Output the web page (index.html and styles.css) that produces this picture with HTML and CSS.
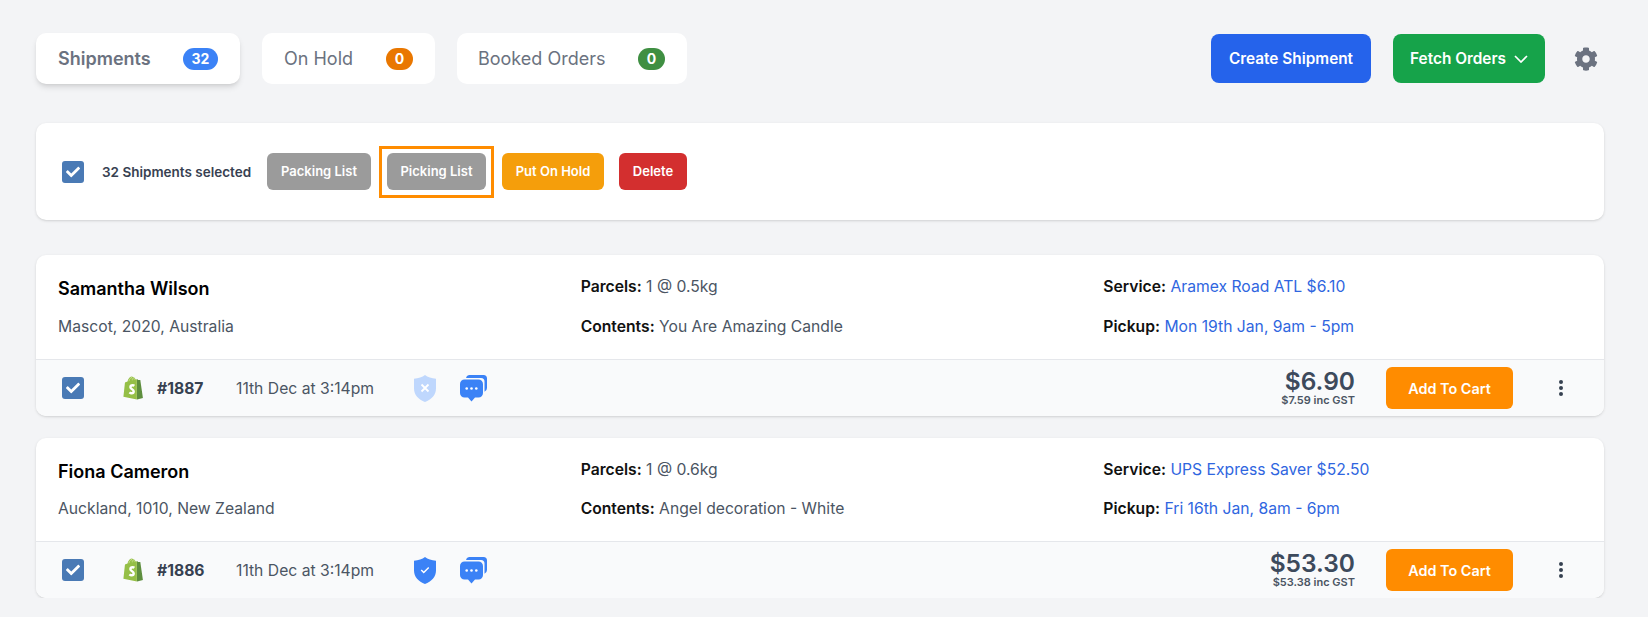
FILE: index.html
```html
<!DOCTYPE html>
<html lang="en">
<head>
<meta charset="utf-8">
<title>Shipments</title>
<link rel="stylesheet" href="styles.css">
</head>
<body>
<svg class="defs" width="0" height="0" aria-hidden="true">
  <symbol id="i-check" viewBox="0 0 512 512"><path fill="#fff" d="M173.898 439.404l-166.4-166.4c-9.997-9.997-9.997-26.206 0-36.204l36.203-36.204c9.997-9.998 26.207-9.998 36.204 0L192 312.69 432.095 72.596c9.997-9.997 26.207-9.997 36.204 0l36.203 36.204c9.997 9.997 9.997 26.206 0 36.204l-294.4 294.401c-9.998 9.997-26.207 9.997-36.204-.001z"/></symbol>
  <symbol id="i-shopify" viewBox="0 0 21 24">
    <path fill="#95bf47" d="M14.6 3.2l-1 .3C13.2 2.2 12.5 1.2 11.3 1.2h-.2C10.7.7 10.3.5 9.9.5 7.2.5 5.9 3.900 5.500 5.600l-1.900.6c-.6.2-.6.2-.7.8L1.400 20.800 14.900 23.400V3.200h-.3z"/>
    <path fill="#5e8e3e" d="M15 3.100v20.300l6-1.400S18.400 4.500 18.400 4.400c0-.2-.1-.3-.3-.3l-1.900-.1-1.200-.9z"/>
    <path fill="none" stroke="#c7e08f" stroke-width=".9" d="M6.900 5.200C7.500 3.100 8.600 1.400 10 1.300M10.300 4.300V3.600c0-1-.1-1.700-.6-2M12.300 3.700c-.1-.9-.5-1.900-1.200-2.100"/>
    <path fill="none" stroke="#fff" stroke-width="2.400" d="M12.400 9.700c-.5-.3-1.100-.4-1.700-.4-1.500 0-2.300 1-2.300 1.900 0 2 3.300 2 3.300 4.100 0 1.200-1 2-2.100 2-.8 0-1.600-.4-2.200-.9"/>
  </symbol>
  <symbol id="i-chat" viewBox="0 0 27 27">
    <path fill="#3b82f6" d="M9 0h14.500A3.500 3.500 0 0 1 27 3.500V13a4 4 0 0 1-2.500 3.700V6.500A3.500 3.500 0 0 0 21 3H6A3.500 3.500 0 0 1 9 0z"/>
    <path fill="#3b82f6" d="M4.500 4.500H18.500A4.500 4.500 0 0 1 23 9V18a4.500 4.500 0 0 1-4.500 4.500H15L11.500 26.500 8 22.500H4.500A4.500 4.500 0 0 1 0 18V9A4.500 4.500 0 0 1 4.500 4.500z"/>
    <circle cx="6.700" cy="13.500" r="1.300" fill="#fff"/><circle cx="11.500" cy="13.500" r="1.300" fill="#fff"/><circle cx="16.300" cy="13.500" r="1.300" fill="#fff"/>
  </symbol>
  <symbol id="i-shield" viewBox="0 0 22 27"><path d="M11 0c2.700 2.200 6.600 3.400 11 3.700V13.500C22 20 17.500 24.500 11 27 4.500 24.500 0 20 0 13.500V3.700C4.400 3.400 8.300 2.200 11 0z"/></symbol>
</svg>

<main class="page">
  <header class="topbar">
    <nav class="tabs">
      <a class="tab tab-active">Shipments <span class="pill pill-blue">32</span></a>
      <a class="tab tab-hold">On Hold <span class="pill pill-orange">0</span></a>
      <a class="tab tab-booked">Booked Orders <span class="pill pill-green">0</span></a>
    </nav>
    <div class="actions">
      <button class="btn-top btn-create">Create Shipment</button>
      <button class="btn-top btn-fetch">Fetch Orders
        <svg class="chevron" viewBox="0 0 14 8" width="14" height="8"><path d="M1 1l6 6 6-6" fill="none" stroke="#fff" stroke-width="1.700"/></svg>
      </button>
      <svg class="gear" viewBox="0 0 512 512" width="24" height="24"><path fill="#6b7280" d="M487.4 315.700l-42.600-24.600c4.300-23.200 4.300-47 0-70.200l42.600-24.600c4.900-2.800 7.100-8.600 5.500-14-11.100-35.600-30-67.800-54.700-94.600-3.800-4.100-10-5.100-14.800-2.300L380.800 110c-17.900-15.400-38.500-27.300-60.800-35.100V25.800c0-5.600-3.900-10.500-9.400-11.700-36.700-8.200-74.300-7.800-109.200 0-5.500 1.200-9.400 6.100-9.400 11.700V75c-22.200 7.900-42.800 19.800-60.800 35.100L88.700 85.500c-4.900-2.800-11-1.900-14.800 2.300-24.700 26.700-43.600 58.900-54.700 94.600-1.700 5.400.6 11.200 5.500 14L67.300 221c-4.300 23.200-4.300 47 0 70.200l-42.600 24.600c-4.900 2.800-7.100 8.600-5.500 14 11.100 35.600 30 67.800 54.700 94.600 3.800 4.100 10 5.100 14.800 2.300l42.600-24.600c17.900 15.400 38.500 27.300 60.800 35.100v49.200c0 5.600 3.900 10.500 9.400 11.700 36.700 8.200 74.300 7.800 109.200 0 5.500-1.200 9.400-6.100 9.400-11.700v-49.200c22.200-7.900 42.800-19.800 60.800-35.100l42.600 24.600c4.900 2.800 11 1.900 14.800-2.300 24.700-26.700 43.600-58.900 54.700-94.600 1.500-5.500-.7-11.300-5.600-14.100zM256 336c-44.100 0-80-35.900-80-80s35.900-80 80-80 80 35.900 80 80-35.900 80-80 80z"/></svg>
    </div>
  </header>

  <section class="bulk">
    <span class="check"><svg width="14" height="14"><use href="#i-check"/></svg></span>
    <span class="bulk-count">32 Shipments selected</span>
    <button class="btn-bulk btn-grey btn-packing">Packing List</button>
    <span class="focus-ring"><button class="btn-bulk btn-grey btn-picking">Picking List</button></span>
    <button class="btn-bulk btn-amber">Put On Hold</button>
    <button class="btn-bulk btn-red">Delete</button>
  </section>

  <article class="card">
    <div class="card-body">
      <div class="col">
        <h2 class="name">Samantha Wilson</h2>
        <p class="line">Mascot, 2020, Australia</p>
      </div>
      <div class="col">
        <p class="line"><b>Parcels:</b> 1 @ 0.5kg</p>
        <p class="line"><b>Contents:</b> You Are Amazing Candle</p>
      </div>
      <div class="col">
        <p class="line"><b>Service:</b> <a class="link">Aramex Road ATL $6.10</a></p>
        <p class="line"><b>Pickup:</b> <a class="link">Mon 19th Jan, 9am - 5pm</a></p>
      </div>
    </div>
    <div class="card-foot">
      <span class="check"><svg width="14" height="14"><use href="#i-check"/></svg></span>
      <svg class="shopify" width="21" height="24"><use href="#i-shopify"/></svg>
      <span class="order">#1887</span>
      <span class="date">11th Dec at 3:14pm</span>
      <span class="shield shield-off">
        <svg width="22" height="27"><use href="#i-shield"/></svg>
        <svg class="shield-mark" viewBox="0 0 10 10" width="10" height="10"><path d="M1.500 1.500l7 7M8.500 1.500l-7 7" fill="none" stroke="#fff" stroke-width="1.800"/></svg>
      </span>
      <svg class="chat" width="27" height="27"><use href="#i-chat"/></svg>
      <div class="price">
        <strong class="price-main">$6.90</strong>
        <span class="price-gst">$7.59 inc GST</span>
      </div>
      <button class="btn-cart">Add To Cart</button>
      <span class="kebab"><i></i><i></i><i></i></span>
    </div>
  </article>

  <article class="card card-second">
    <div class="card-body">
      <div class="col">
        <h2 class="name">Fiona Cameron</h2>
        <p class="line">Auckland, 1010, New Zealand</p>
      </div>
      <div class="col">
        <p class="line"><b>Parcels:</b> 1 @ 0.6kg</p>
        <p class="line"><b>Contents:</b> Angel decoration - White</p>
      </div>
      <div class="col">
        <p class="line"><b>Service:</b> <a class="link">UPS Express Saver $52.50</a></p>
        <p class="line"><b>Pickup:</b> <a class="link">Fri 16th Jan, 8am - 6pm</a></p>
      </div>
    </div>
    <div class="card-foot">
      <span class="check"><svg width="14" height="14"><use href="#i-check"/></svg></span>
      <svg class="shopify" width="21" height="24"><use href="#i-shopify"/></svg>
      <span class="order">#1886</span>
      <span class="date">11th Dec at 3:14pm</span>
      <span class="shield shield-on">
        <svg width="22" height="27"><use href="#i-shield"/></svg>
        <svg class="shield-mark" viewBox="0 0 12 10" width="10" height="9"><path d="M1.500 5l3 3 6-6" fill="none" stroke="#fff" stroke-width="1.800"/></svg>
      </span>
      <svg class="chat" width="27" height="27"><use href="#i-chat"/></svg>
      <div class="price">
        <strong class="price-main">$53.30</strong>
        <span class="price-gst">$53.38 inc GST</span>
      </div>
      <button class="btn-cart">Add To Cart</button>
      <span class="kebab"><i></i><i></i><i></i></span>
    </div>
  </article>
</main>
</body>
</html>
```

FILE: styles.css
```css
* { box-sizing: border-box; }
html, body { margin: 0; padding: 0; }
body {
  background: #f3f4f6;
  font-family: Inter, "Liberation Sans", sans-serif;
  color: #374151;
  overflow: hidden;
}
.defs { display: block; height: 0; }
.page { padding: 33px 44px 0 36px; }
button { font-family: inherit; border: 0; cursor: pointer; padding: 0; }
p, h2 { margin: 0; }

.topbar { display: flex; justify-content: space-between; align-items: flex-start; }
.tabs { display: flex; gap: 22px; }
.tab {
  height: 51px;
  display: flex;
  align-items: center;
  justify-content: space-between;
  background: #fff;
  border-radius: 10px;
  padding: 0 22px;
  font-size: 18px;
  color: #6b7280;
}
.tab-active { width: 204px; font-weight: 600; box-shadow: 0 4px 6px -1px rgba(0,0,0,.12), 0 2px 4px -2px rgba(0,0,0,.1); }
.tab-hold { width: 173px; }
.tab-booked { width: 230px; padding-left: 21px; }
.pill {
  height: 22px;
  min-width: 27px;
  padding: 0 8px;
  border-radius: 11px;
  display: inline-flex;
  align-items: center;
  justify-content: center;
  font-size: 14px;
  font-weight: 700;
  color: #fff;
}
.pill-blue { background: #3b82f6; width: 35px; }
.pill-orange { background: #e97700; }
.pill-green { background: #3f8f42; }

.actions { display: flex; align-items: center; padding: 1px 6px 0 0; }
.btn-top {
  height: 49px;
  border-radius: 8px;
  color: #fff;
  font-size: 15.36px;
  font-weight: 600;
  display: flex;
  align-items: center;
  justify-content: center;
}
.btn-create { width: 160px; background: #2563eb; }
.btn-fetch { width: 152px; margin-left: 22px; background: #16a34a; gap: 8px; }
.gear { margin-left: 29px; }

.bulk {
  margin-top: 39px;
  height: 97px;
  background: #fff;
  border-radius: 10px;
  box-shadow: 0 1px 3px rgba(0,0,0,.12), 0 1px 2px -1px rgba(0,0,0,.1);
  display: flex;
  align-items: center;
  padding-left: 26px;
}
.check {
  flex: none;
  width: 22px;
  height: 22px;
  border-radius: 3px;
  background: #4a7ab5;
  display: flex;
  align-items: center;
  justify-content: center;
}
.bulk-count { margin-left: 18px; font-size: 13.5px; font-weight: 600; width: 165px; }
.btn-bulk {
  height: 37px;
  border-radius: 6px;
  color: #fff;
  font-size: 13px;
  font-weight: 600;
  padding-bottom: 1px;
}
.btn-grey { background: #9b9b9b; }
.btn-packing { width: 104px; }
.focus-ring {
  display: flex;
  align-items: center;
  justify-content: center;
  width: 115px;
  height: 52px;
  margin: 0 8px;
  border: 3px solid #ff8c00;
}
.btn-picking { width: 99px; }
.btn-amber { width: 102px; background: #f59e0b; }
.btn-red { width: 68px; margin-left: 15px; background: #d32f2f; }

.card {
  margin-top: 22px;
  background: #fff;
  border-radius: 10px;
  box-shadow: 0 1px 3px rgba(0,0,0,.12), 0 1px 2px -1px rgba(0,0,0,.1);
  overflow: hidden;
}
.bulk + .card { margin-top: 35px; }
.card-body {
  height: 105px;
  display: grid;
  grid-template-columns: repeat(3, 522.67px);
  padding-left: 22px;
  border-bottom: 1px solid #e5e7eb;
}
.card-second .card-body { height: 104px; }
.col {
  display: flex;
  flex-direction: column;
  justify-content: space-between;
  padding: 22px 0 22px;
}
.col:first-child { padding-top: 23px; }
.name { font-size: 18px; font-weight: 600; line-height: 22px; color: #000; }
.line { font-size: 15.7px; line-height: 20px; color: #4b5563; }
.line b { font-weight: 600; color: #111; }
.link { color: #2f66e0; }

.card-foot {
  height: 56px;
  display: flex;
  align-items: center;
  background: #f9fafb;
  padding: 0 40px 0 26px;
}
.shopify { margin-left: 38px; flex: none; }
.order { margin-left: 14px; width: 79px; font-size: 15.7px; font-weight: 700; color: #374151; }
.date { width: 178px; font-size: 15.7px; color: #4b5563; }
.shield { position: relative; width: 22px; height: 27px; display: block; flex: none; }
.shield > svg:first-child { display: block; }
.shield-mark { position: absolute; left: 50%; top: 50%; transform: translate(-50%, -50%); }
.shield-off { fill: #bfd7fd; }
.shield-on { fill: #3b82f6; }
.chat { margin-left: 24px; flex: none; }
.price {
  margin-left: auto;
  display: flex;
  flex-direction: column;
  align-items: flex-end;
  color: #3d4a5c;
  padding-bottom: 2px;
}
.price-main { font-size: 24.5px; font-weight: 600; line-height: 26px; }
.price-gst { font-size: 11px; font-weight: 600; line-height: 13px; color: #4b5563; }
.btn-cart {
  margin-left: 31px;
  width: 127px;
  height: 42px;
  border-radius: 6px;
  background: #ff8c00;
  color: #fff;
  font-size: 14.4px;
  font-weight: 600;
}
.kebab {
  margin-left: 46px;
  width: 5px;
  display: flex;
  flex-direction: column;
  gap: 2px;
}
.kebab i { display: block; width: 4px; height: 4px; border-radius: 50%; background: #374151; }
```
